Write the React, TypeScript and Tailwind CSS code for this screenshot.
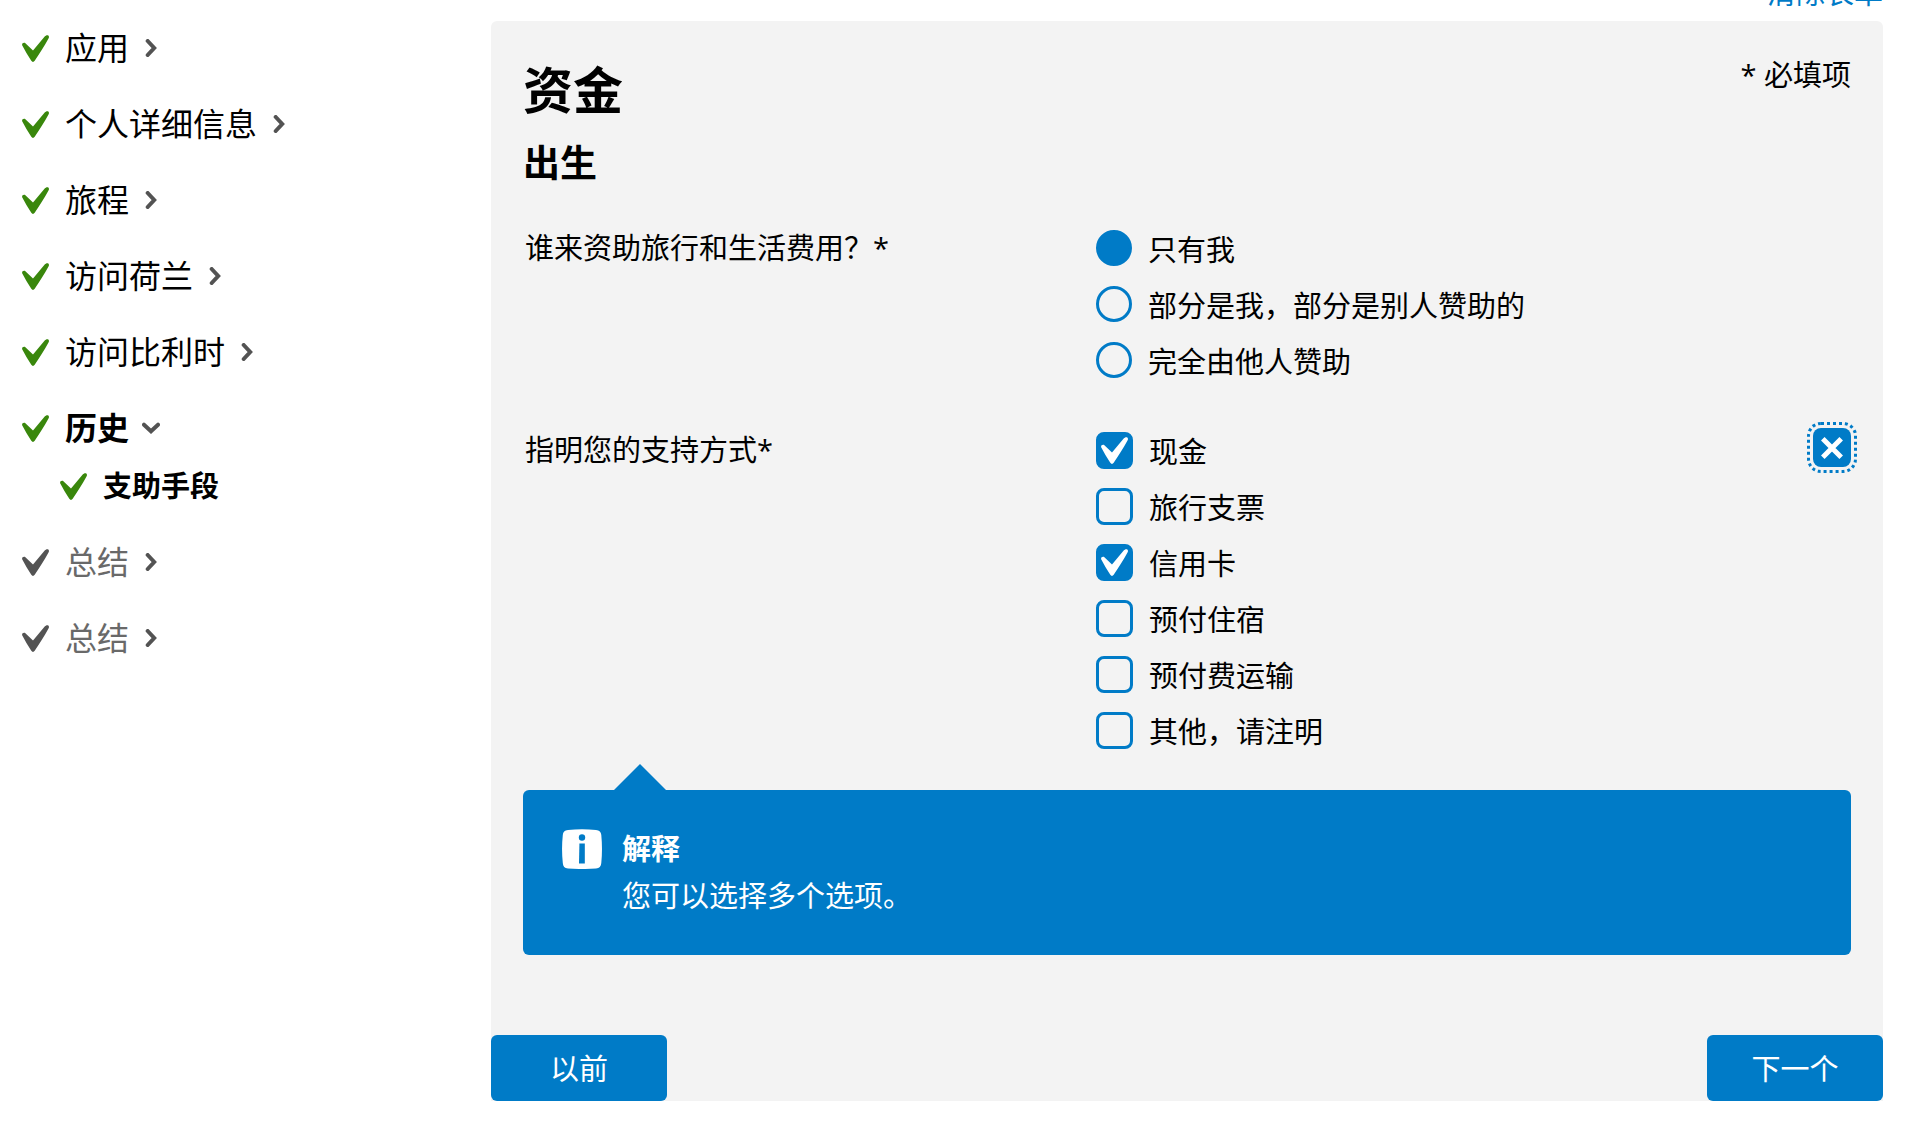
import { useState } from "react";

const steps = [
  { label: "应用", state: "done" },
  { label: "个人详细信息", state: "done" },
  { label: "旅程", state: "done" },
  { label: "访问荷兰", state: "done" },
  { label: "访问比利时", state: "done" },
  { label: "历史", state: "current", sub: "支助手段" },
  { label: "总结", state: "pending" },
  { label: "总结", state: "pending" },
];

const funding = ["只有我", "部分是我，部分是别人赞助的", "完全由他人赞助"];

const means = ["现金", "旅行支票", "信用卡", "预付住宿", "预付费运输", "其他，请注明"];

function Check({ className }: { className: string }) {
  return (
    <svg viewBox="0 0 27 27" className={className} fill="currentColor" aria-hidden="true">
      <path d="M.3 10.6C-.6 8.6 1.6 7 3.4 8.3L11 15.6 22.7 1.6C23.6.5 24.8-.1 26 .3 27.2.9 27.2 2.4 26.5 3.6 22.3 11.2 17.6 18.6 12.7 25.8 11.8 27.2 10.2 27.3 9.3 25.8 6 20.8 3 15.8.3 10.6Z" />
    </svg>
  );
}

function Chevron({ open }: { open: boolean }) {
  return (
    <svg
      viewBox="0 0 18 18"
      className="size-[18px] shrink-0 text-[#535353]"
      fill="none"
      stroke="currentColor"
      strokeWidth="4"
      strokeLinecap="round"
      aria-hidden="true"
    >
      <path d={open ? "M2 5.7 9 12.2 16 5.7" : "M5.7 2 12.2 9 5.7 16"} />
    </svg>
  );
}

export default function App() {
  const [payer, setPayer] = useState(0);
  const [picked, setPicked] = useState([0, 2]);
  const [help, setHelp] = useState(true);

  const toggle = (i: number) =>
    setPicked(picked.includes(i) ? picked.filter((p) => p !== i) : [...picked, i]);

  return (
    <div className="flex min-h-screen bg-white pr-[29px] font-['Open_Sans','Noto_Sans_CJK_SC',sans-serif] text-[29px] leading-[40px] text-black">
      <nav className="w-[491px] shrink-0 pt-[10px] pl-[22px]">
        <ul>
          {steps.map((step, i) => (
            <li key={i}>
              <a
                href="#"
                className={
                  step.state === "current"
                    ? "flex h-[76px] items-center text-[32px] font-bold"
                    : step.state === "done"
                      ? "flex h-[76px] items-center text-[32px]"
                      : "flex h-[76px] items-center text-[32px] text-[#696969]"
                }
              >
                <Check
                  className={
                    step.state === "pending"
                      ? "mr-4 size-[27px] shrink-0 text-[#535353]"
                      : "mr-4 size-[27px] shrink-0 text-[#39870c]"
                  }
                />
                <span className="mr-[13px]">{step.label}</span>
                <Chevron open={step.state === "current"} />
              </a>
              {step.sub && (
                <ul className="pb-[18px] pl-[38px]">
                  <li>
                    <a href="#" className="flex h-10 items-center font-bold">
                      <Check className="mr-4 size-[27px] shrink-0 text-[#39870c]" />
                      {step.sub}
                    </a>
                  </li>
                </ul>
              )}
            </li>
          ))}
        </ul>
      </nav>

      <div className="min-w-0 grow">
        <div className="flex h-[21px] items-end justify-end overflow-hidden pb-2">
          <a href="#" className="text-[#007bc7]">
            清除表单
          </a>
        </div>

        <main className="rounded-t-md bg-[#f3f3f3]">
          <div className="px-8 pt-[41px] pb-20">
            <header className="flex items-start justify-between">
              <h1 className="text-[50px] leading-[56px] font-bold">资金</h1>
              <p className="-mt-[7px]">* 必填项</p>
            </header>
            <h2 className="mt-5 text-[37px] leading-[50px] font-bold">出生</h2>

            <div
              role="radiogroup"
              aria-labelledby="payer-label"
              className="mt-8 grid grid-cols-[573fr_717fr_38px]"
            >
              <p id="payer-label" className="pt-2 pl-[2px]">
                谁来资助旅行和生活费用？*
              </p>
              <div>
                {funding.map((text, i) => (
                  <label key={text} className="flex h-14 items-center gap-4">
                    <input
                      type="radio"
                      name="payer"
                      checked={payer === i}
                      onChange={() => setPayer(i)}
                      className="size-9 shrink-0 appearance-none rounded-full border-3 border-[#007bc7] checked:bg-[#007bc7]"
                    />
                    <span className="pt-1">{text}</span>
                  </label>
                ))}
              </div>
            </div>

            <div
              role="group"
              aria-labelledby="means-label"
              className="mt-[34px] grid grid-cols-[573fr_717fr_38px]"
            >
              <p id="means-label" className="pt-2 pl-[2px]">
                指明您的支持方式*
              </p>
              <div>
                {means.map((text, i) => (
                  <label key={text} className="flex h-14 items-center gap-4">
                    <span className="relative size-[37px] shrink-0">
                      <input
                        type="checkbox"
                        checked={picked.includes(i)}
                        onChange={() => toggle(i)}
                        className="block size-full appearance-none rounded-lg border-3 border-[#007bc7] checked:bg-[#007bc7]"
                      />
                      {picked.includes(i) && (
                        <Check className="pointer-events-none absolute top-[5px] left-[5px] size-[27px] text-white" />
                      )}
                    </span>
                    <span className="pt-1">{text}</span>
                  </label>
                ))}
              </div>
              <button
                type="button"
                aria-label="关闭解释"
                onClick={() => setHelp(!help)}
                className="mt-[6px] flex h-[39px] w-[38px] items-center justify-center rounded-lg bg-[#007bc7] text-white outline-3 outline-offset-3 outline-[#007bc7] outline-dotted"
              >
                <svg viewBox="0 0 22 22" className="size-[22px]" stroke="currentColor" strokeWidth="5" aria-hidden="true">
                  <path d="M1.8 1.8 20.2 20.2M20.2 1.8 1.8 20.2" />
                </svg>
              </button>
            </div>

            {help && (
              <section className="relative mt-8 flex gap-5 rounded-md bg-[#007bc7] pt-[35px] pr-8 pb-9 pl-[39px] text-white">
                <svg viewBox="0 0 52 26" className="absolute -top-[26px] left-[91px] h-[26px] w-[52px] fill-[#007bc7]" aria-hidden="true">
                  <path d="M0 26 26 0 52 26Z" />
                </svg>
                <svg viewBox="0 0 40 40" className="mt-1 size-10 shrink-0" aria-hidden="true">
                  <path
                    d="M6 1C15 0 25 0 34 1 37.500 1.300 39 3 39.300 6 40.200 15 40.200 25 39.300 34 39 37.500 37.500 39.300 34 39.500 25 40.200 15 40.200 6 39.500 2.500 39.300 1 37.500.8 34-.2 25-.2 15 .8 6 1 3 2.500 1.300 6 1Z"
                    fill="#fff"
                  />
                  <circle cx="20" cy="8.500" r="3.200" fill="#007bc7" />
                  <path d="M17.400 14.500H22.800V34.500H17Z" fill="#007bc7" />
                </svg>
                <div className="leading-[47px]">
                  <h3 className="font-bold">解释</h3>
                  <p>您可以选择多个选项。</p>
                </div>
              </section>
            )}
          </div>

          <div className="flex justify-between">
            <button type="button" className="h-[66px] w-44 rounded-md bg-[#007bc7] pt-[2px] text-white">
              以前
            </button>
            <button type="button" className="h-[66px] w-44 rounded-md bg-[#007bc7] pt-[2px] text-white">
              下一个
            </button>
          </div>
        </main>
      </div>
    </div>
  );
}
